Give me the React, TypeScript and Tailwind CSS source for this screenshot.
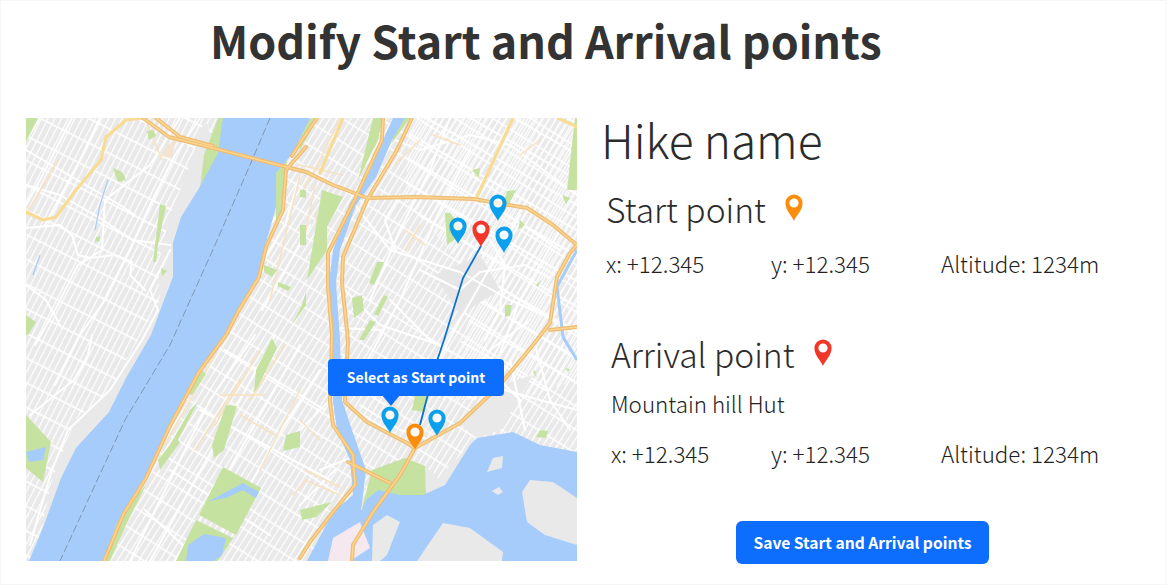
const pts = (p: number[][]) => p.map((q) => q.join(',')).join(' ');

// page coordinates, the map svg viewBox starts at 26,118
const hudson = [[223,118],[218,153],[198,190],[181,217],[173,243],[173,277],[164,300],[151,335],[126,378],[109,412],[76,448],[61,478],[44,525],[29,561],[104,561],[116,525],[139,492],[149,472],[169,428],[199,372],[226,335],[239,307],[256,283],[266,243],[276,207],[276,173],[293,153],[310,118]];
const harlem = [[393,118],[383,140],[367,177],[350,203],[333,250],[329,283],[333,340],[333,402],[337,430],[350,460],[353,495],[333,512],[307,561],[330,561],[360,520],[366,470],[352,430],[342,400],[340,340],[336,283],[340,250],[356,205],[376,177],[392,140],[405,118]];
const eastRiver = [[423,495],[445,485],[470,445],[477,438],[513,432],[540,445],[577,452],[577,561],[340,561],[366,500],[378,490],[400,495]];
const landBits = [
  [[577,498],[553,482],[530,480],[522,492],[527,522],[545,535],[577,545]],
  [[417,561],[443,523],[470,528],[503,552],[502,561]],
  [[487,472],[493,458],[503,456],[502,468]],
  [[492,491],[499,487],[503,492],[498,495]],
  [[333,538],[360,522],[370,548],[350,561],[328,561]],
  [[373,525],[387,515],[400,522],[387,555],[380,561],[372,561]],
];
const parks = [
  [[26,118],[38,118],[26,142]],[[147,131],[153,130],[156,136],[149,140]],[[200,188],[204,155],[218,118],[225,118],[219,150],[208,185]],
  [[160,204],[166,206],[158,245],[156,262],[153,262]],[[161,268],[167,271],[162,276]],[[113,168],[122,172],[126,180],[118,182]],
  [[96,237],[100,236],[100,241],[95,242]],[[26,315],[36,322],[28,335],[26,335]],
  [[265,250],[276,220],[276,173],[287,160],[283,210]],[[264,265],[277,270],[272,277],[264,272]],[[278,282],[291,287],[288,291],[278,286]],
  [[292,325],[302,305],[306,292],[306,305]],[[219,310],[226,305],[219,335]],[[300,190],[306,190],[306,198],[300,197]],
  [[26,415],[51,442],[43,482],[26,468]],[[272,338],[277,348],[258,387],[254,392],[256,370]],[[198,368],[206,374],[192,395],[188,393]],
  [[226,405],[237,406],[224,450],[214,458],[212,445]],[[286,435],[300,431],[300,447],[283,451]],[[180,442],[178,440],[198,402],[190,410],[170,445],[158,460],[160,470]],
  [[223,467],[261,488],[236,535],[199,515]],[[196,520],[233,538],[218,561],[176,561]],[[104,561],[116,525],[139,492],[146,485],[126,525],[110,561]],
  [[445,213],[450,213],[465,232],[447,245]],[[507,191],[516,190],[508,206],[502,207]],[[575,118],[577,118],[577,190],[567,190]],[[472,170],[480,168],[479,178]],
  [[377,262],[384,262],[374,285],[369,283]],[[352,298],[362,295],[364,310],[354,318]],[[384,295],[388,297],[378,316],[374,314]],[[370,320],[376,322],[364,340],[359,340]],[[300,225],[306,225],[306,245],[300,245]],
  [[322,190],[343,197],[327,227],[327,250],[307,280]],[[373,118],[383,118],[378,140],[358,180]],[[410,118],[396,118],[392,143]],[[300,120],[318,118],[300,150]],
  [[368,373],[378,374],[382,385],[372,388]],[[416,390],[428,388],[425,412],[412,410]],
  [[405,458],[425,466],[426,495],[400,515],[382,520],[361,512],[372,470]],[[300,510],[332,502],[316,517],[302,520]],[[488,380],[490,375],[495,378],[492,385]],
  [[540,430],[548,431],[546,438],[536,437]],[[505,305],[512,305],[510,316],[505,317]],[[535,370],[537,378],[533,372]],[[565,368],[570,369],[568,372]],
  [[562,195],[570,198],[566,204]],[[480,228],[492,226],[487,233]],[[520,220],[525,225],[518,230]],[[536,285],[541,280],[538,287]],
];
const hospitals = [[[165,148],[176,138],[172,158],[161,156]],[[315,212],[325,210],[326,232],[316,236]]];
const lakes = [[[26,452],[46,447],[43,460],[29,462]],[[188,545],[204,534],[226,538],[222,555],[214,561],[186,561]],[[243,483],[259,492],[256,498],[243,490],[226,498],[209,501]]];
const whiteRoads = [
  [[40,118],[26,140]],[[72,118],[40,180],[26,205]],[[100,118],[80,160],[45,225]],[[26,185],[60,195],[100,218],[132,240],[170,245]],[[26,150],[60,170],[120,205],[135,215]],[[26,228],[60,225],[72,235],[78,255],[90,258],[115,255],[132,262],[130,275],[145,290]],[[200,118],[175,155],[150,205],[130,250],[105,300],[80,335],[55,385]],[[180,118],[150,165],[105,200],[102,250],[78,265],[55,310],[35,345]],[[170,250],[150,290],[158,310],[142,340],[110,390],[68,430],[52,470],[40,510],[30,545]],[[26,285],[46,300],[60,325]],[[92,335],[88,355],[74,380],[30,415]],
  [[255,335],[210,400],[175,470],[130,561]],[[275,335],[232,415],[195,480],[150,561]],[[300,345],[260,415],[215,495],[175,561]],[[320,370],[275,440],[236,510],[205,561]],[[300,175],[285,225],[250,285]],[[310,225],[280,280],[262,310]],[[225,350],[325,410]],[[200,410],[330,480]],[[170,470],[270,535]],[[145,510],[200,561]],
  [[450,118],[430,170],[400,230],[370,300]],[[470,150],[440,210],[400,300],[365,365]],[[520,215],[460,320],[420,395]],[[560,230],[520,300],[490,380]],[[355,205],[390,250],[460,272],[510,300],[577,330]],[[370,130],[420,150],[470,135],[510,145],[577,195]],[[390,300],[430,340],[500,380],[520,400]],[[420,270],[460,290],[480,272],[525,265],[550,278]],[[490,240],[505,265],[500,310],[485,340]],[[395,250],[385,220],[400,195]],[[345,290],[380,325],[440,345]],[[340,328],[380,330]],[[360,405],[400,430],[430,440]],[[500,210],[560,250]],[[360,170],[400,130]],
  [[505,390],[540,400],[577,410]],[[535,345],[550,400],[570,430]],[[510,360],[525,430]],[[460,385],[490,350],[530,320]],[[330,400],[300,430]],[[320,470],[350,458]],[[300,505],[335,470]],
];
const tanRoads = [
  [[58,160],[26,215]],[[100,470],[70,510]],[[162,160],[145,118]],[[88,510],[78,561]],[[195,450],[240,380]],[[215,425],[260,350]],[[250,400],[285,345]],[[165,445],[215,355]],[[300,390],[260,470]],[[265,395],[220,395]],[[240,415],[275,435]],[[283,150],[306,130]],[[300,175],[270,300]],
  [[340,118],[315,170],[300,195]],[[300,165],[342,175]],[[315,185],[305,235]],[[433,135],[460,145]],[[420,225],[405,250]],[[405,230],[425,245]],[[420,140],[395,165]],[[540,140],[520,155]],[[305,480],[340,495]],[[305,470],[340,487]],[[400,410],[385,400]],[[300,420],[320,440]],[[293,495],[306,480]],
];
const yellowRoads = [
  [[143,118],[126,120],[106,137],[101,160],[76,190],[56,217],[43,220],[26,212]],
  [[513,118],[477,197]],[[558,118],[577,127]],[[343,118],[320,173]],
];
const highways = [
  [[143,118],[169,137],[213,148],[306,172],[333,185],[367,198],[417,197],[473,199],[527,208],[553,225],[577,245]],
  [[306,147],[286,170],[283,210],[266,247],[259,277],[239,310],[226,335],[199,372],[169,428],[146,478],[123,515],[104,561]],
  [[317,118],[300,143],[292,156]],
  [[383,118],[382,140],[353,203],[328,253],[328,287],[332,335],[330,402],[333,425],[353,455],[355,485],[333,512],[310,542],[300,558]],
  [[412,118],[397,150],[367,200],[343,257],[342,283],[348,340],[345,402],[367,422],[407,443],[415,448]],
  [[415,448],[460,423],[500,385],[533,345],[550,323],[557,277],[570,253],[577,245]],
  [[550,330],[577,327]],
  [[415,448],[400,475],[373,512],[353,545],[352,561]],
  [[348,462],[390,483]],
  [[156,118],[180,137],[213,146]],
];
const route = [[481,246],[463,278],[444,340],[438,358],[427,398],[420,425]];
const bluePins = [[498,203],[458,226],[504,235],[390,415],[437,418]];

function Pin({ x, y, color }: { x: number; y: number; color: string }) {
  return (
    <g transform={`translate(${x} ${y})`}>
      <circle r="4.6" fill="#ffffff" fillOpacity="0.75" />
      <path
        fill={color}
        fillRule="evenodd"
        d="M0 18C-1.8 13-8.6 7.5-8.6 0A8.6 8.6 0 1 1 8.6 0C8.6 7.5 1.8 13 0 18ZM0-4.6A4.6 4.6 0 1 0 0 4.6A4.6 4.6 0 1 0 0-4.6Z"
      />
    </g>
  );
}

function SidePin({ color }: { color: string }) {
  return (
    <svg viewBox="-9 -9 18 28" className="mb-[2px] h-[28px] w-[18px]">
      <Pin x={0} y={0} color={color} />
    </svg>
  );
}

function Lines({ list, color, width }: { list: number[][][]; color: string; width: number }) {
  return (
    <g fill="none" stroke={color} strokeWidth={width} strokeLinejoin="round" strokeLinecap="round">
      {list.map((l, i) => (
        <polyline key={i} points={pts(l)} />
      ))}
    </g>
  );
}

function MapView() {
  return (
    <div className="relative h-[443px] w-[551px] shrink-0">
      <svg viewBox="26 118 551 443" className="h-full w-full">
        <defs>
          <filter id="soft" x="0" y="0" width="100%" height="100%">
            <feGaussianBlur stdDeviation="0.6" />
          </filter>
          <pattern id="gridA" width="22" height="5.4" patternUnits="userSpaceOnUse" patternTransform="rotate(-60)">
            <rect width="22" height="1.2" fill="#fff" />
            <rect width="1.8" height="5.4" fill="#fff" />
          </pattern>
          <pattern id="gridB" width="20" height="6" patternUnits="userSpaceOnUse" patternTransform="rotate(-58)">
            <rect width="20" height="1.2" fill="#fff" />
            <rect width="1.5" height="6" fill="#fff" />
          </pattern>
          <pattern id="gridC" width="22" height="6" patternUnits="userSpaceOnUse" patternTransform="rotate(-63)">
            <rect width="22" height="1.2" fill="#fff" />
            <rect width="1.6" height="6" fill="#fff" />
          </pattern>
        </defs>
        <g filter="url(#soft)">
          <rect x="26" y="118" width="551" height="443" fill="#e9e9e9" />
          <polygon points="223,118 310,118 400,118 577,118 577,452 470,445 423,495 352,561 104,561 200,370" fill="url(#gridB)" />
          <polygon points="26,118 223,118 175,240 151,340 29,561 26,561" fill="url(#gridC)" />
          <polygon points="205,118 190,165 170,215 158,265 160,300 135,345 110,390 75,420 52,480 35,561 70,561 120,420 164,320 190,215 215,150" fill="#e9e9e9" />
          <polygon points="410,118 405,200 460,262 480,290 440,400 520,400 577,380 577,118" fill="url(#gridA)" />
          {hospitals.map((p, i) => (
            <polygon key={i} points={pts(p)} fill="#f3e4d2" />
          ))}
          <polygon points="435,275 480,255 500,290 460,315" fill="#e6e6e6" />
          <polygon points="460,423 500,385 533,375 500,430 477,438" fill="#e9e9e9" />
          <polygon points="360,470 400,470 430,470 445,485 423,495 390,490" fill="#e9e9e9" />
          <Lines list={whiteRoads} color="#ffffff" width={2} />
          <Lines list={tanRoads} color="#f8e2c0" width={1.5} />
          {parks.map((p, i) => (
            <polygon key={i} points={pts(p)} fill="#c6e2a0" />
          ))}
          <polygon points={pts(hudson)} fill="#a6ccfb" />
          <polygon points={pts(harlem)} fill="#a6ccfb" />
          <polygon points={pts(eastRiver)} fill="#a6ccfb" />
          <polyline points="577,250 557,287 563,337 577,360" fill="none" stroke="#a6ccfb" strokeWidth="3" />
          <polyline points="108,180 100,205 95,230" fill="none" stroke="#a6ccfb" strokeWidth="1.2" />
          <polyline points="40,255 33,275" fill="none" stroke="#a6ccfb" strokeWidth="1.2" />
          {landBits.map((p, i) => (
            <polygon key={i} points={pts(p)} fill={i === 4 ? '#f6e8ef' : '#e9e9e9'} />
          ))}
          {lakes.map((p, i) => (
            <polygon key={i} points={pts(p)} fill="#a6ccfb" />
          ))}
          <polyline points="270,118 250,165 215,245 170,345 125,420 60,561" fill="none" stroke="#7f97b3" strokeWidth="1" strokeDasharray="8 3" />
          <Lines list={yellowRoads} color="#f9dc93" width={3.2} />
          <Lines list={highways} color="#eebc74" width={4} />
          <Lines list={highways} color="#fbd48e" width={1.6} />
        </g>
        <polyline points={pts(route)} fill="none" stroke="#0a72d6" strokeWidth="1.8" />
        {bluePins.map(([x, y], i) => (
          <Pin key={i} x={x} y={y} color="#0b9fec" />
        ))}
        <Pin x={481} y={229} color="#f3362a" />
        <Pin x={415} y={432} color="#fb8c0c" />
      </svg>
      <div className="absolute top-[241px] left-[302px] flex h-[37px] w-[176px] items-center justify-center rounded-[4px] bg-[#0d6efd] text-[14px] font-bold text-white">
        Select as Start point
        <span className="absolute top-[36px] left-[54px] h-0 w-0 border-x-[9px] border-t-[11px] border-x-transparent border-t-[#0d6efd]" />
      </div>
    </div>
  );
}

function Coords({ first, second, className }: { first: number; second: number; className: string }) {
  return (
    <div className={`flex text-[22.4px] leading-[30px] font-light text-[#222222] ${className}`}>
      <span style={{ width: first }}>x: +12.345</span>
      <span style={{ width: second }}>y: +12.345</span>
      <span>Altitude: 1234m</span>
    </div>
  );
}

export default function App() {
  return (
    <div className="h-[585px] w-[1167px] overflow-hidden bg-white font-['Noto_Sans_CJK_SC',sans-serif] text-[#2b2b2b] shadow-[inset_0_0_0_1px_#f6f6f6]">
      <h1 className="pt-[10px] pl-[210px] text-[44.8px] leading-[60px] font-bold text-[#333333]">
        Modify Start and Arrival points
      </h1>
      <div className="mt-[48px] flex pl-[26px]">
        <MapView />
        <div className="flex flex-col pl-[25px]">
          <h2 className="-ml-[1px] text-[46px] leading-[42px] font-light">Hike name</h2>
          <div className="mt-[26px] ml-[4px] flex items-center gap-[19px] text-[33.6px] leading-[46px] font-light">
            Start point
            <SidePin color="#fb8c0c" />
          </div>
          <Coords first={165} second={170} className="mt-[16px] ml-[4px]" />
          <div className="mt-[53px] ml-[9px] flex items-center gap-[20px] text-[33.6px] leading-[46px] font-light">
            Arrival point
            <SidePin color="#f3362a" />
          </div>
          <div className="mt-[11px] ml-[9px] text-[22.4px] leading-[30px] font-light text-[#222222]">Mountain hill Hut</div>
          <Coords first={160} second={170} className="mt-[20px] ml-[9px]" />
          <button className="mt-[53px] ml-[134px] h-[43px] w-[253px] rounded-[6px] bg-[#0d6efd] text-[15.6px] font-bold text-white">
            Save Start and Arrival points
          </button>
        </div>
      </div>
    </div>
  );
}
